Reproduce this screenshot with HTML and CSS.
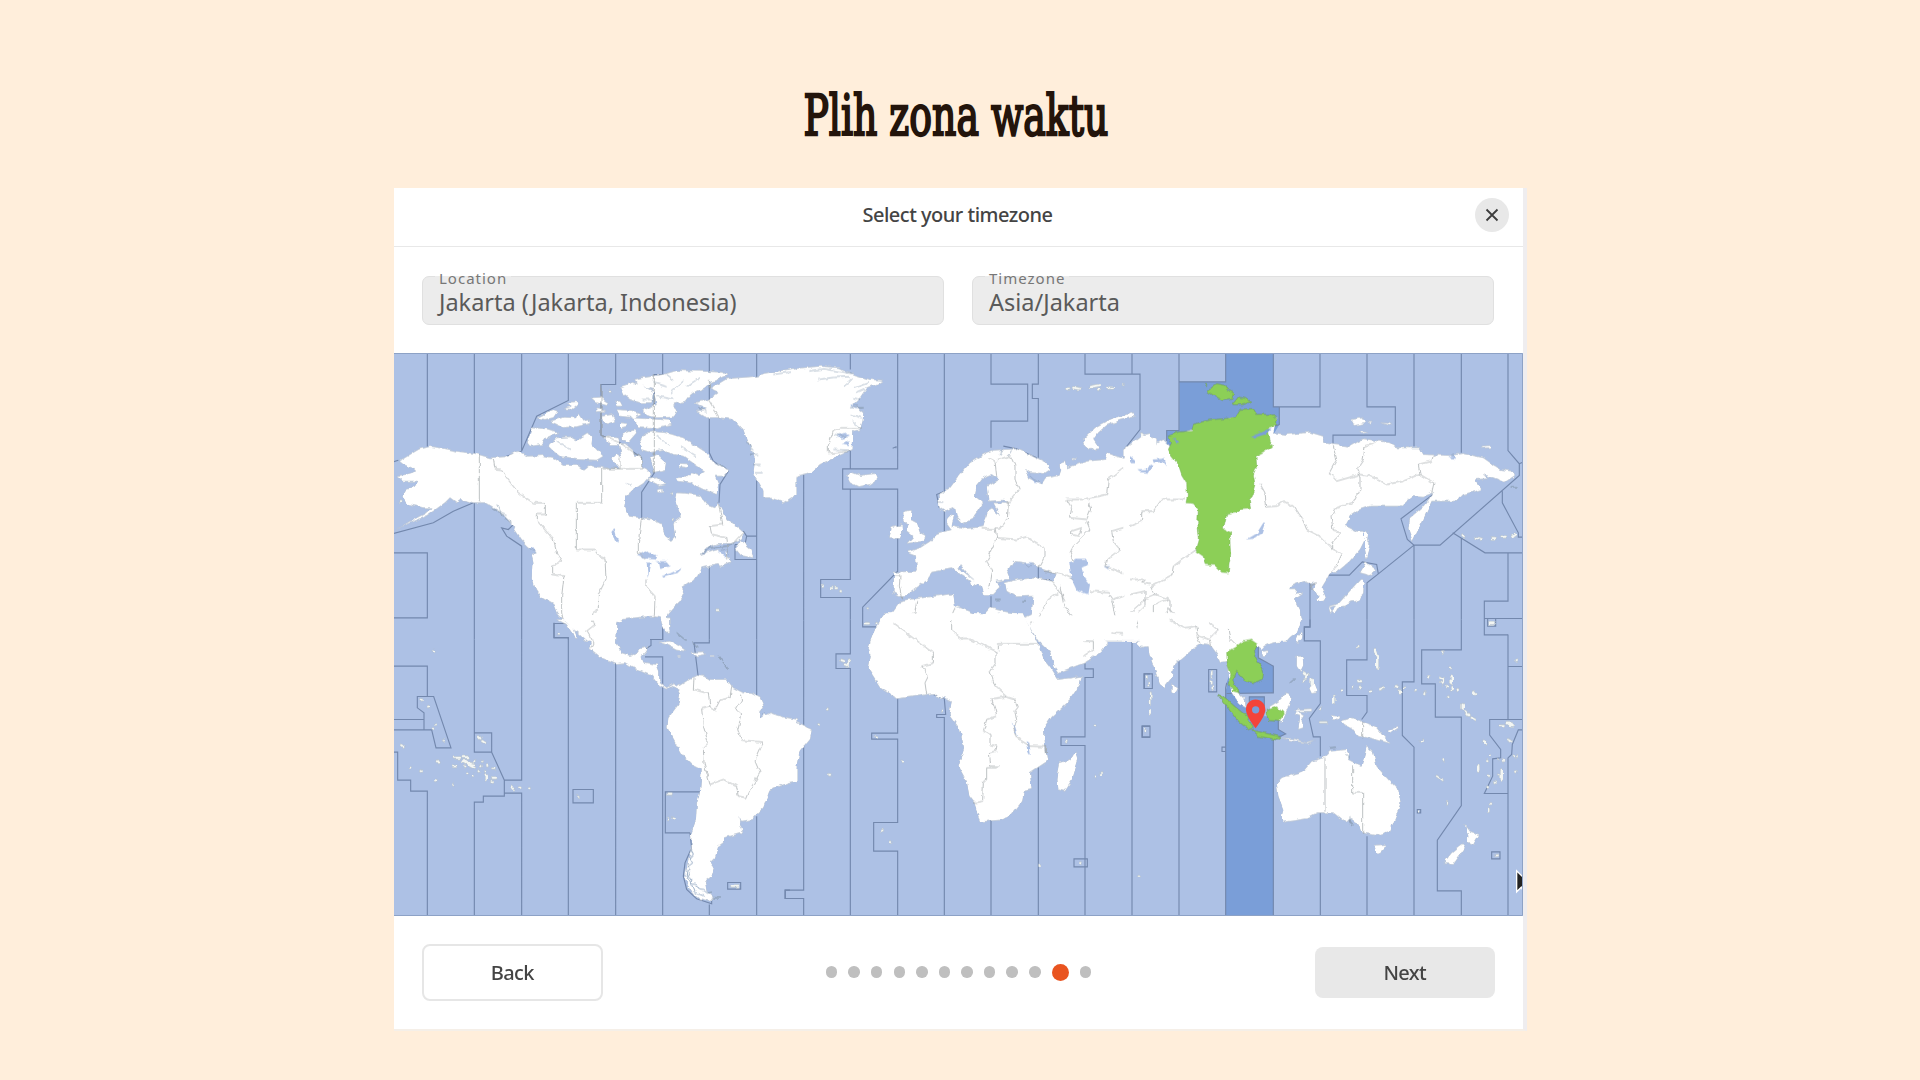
FILE: index.html
```html
<!DOCTYPE html>
<html lang="id">
<head>
<meta charset="utf-8">
<title>Plih zona waktu</title>
<link rel="stylesheet" href="styles.css">
</head>
<body>
<h1 class="title"><span class="title-text">Plih zona waktu</span></h1>
<main class="installer">
  <header class="bar">
    <h2 class="bar-title">Select your timezone</h2>
    <button class="close" aria-label="Close">
      <svg viewBox="0 0 14 14"><path d="M1.5 1.5l11 11M12.5 1.5l-11 11"/></svg>
    </button>
  </header>
  <form class="fields">
    <div class="field"><span class="label">Location</span><span class="value">Jakarta (Jakarta, Indonesia)</span></div>
    <div class="field"><span class="label">Timezone</span><span class="value">Asia/Jakarta</span></div>
  </form>
  <svg class="map" viewBox="394 353.5 1129 563" preserveAspectRatio="none">
    <defs>
      <filter id="coast" x="0" y="0" width="1" height="1" filterUnits="objectBoundingBox" color-interpolation-filters="sRGB">
        <feTurbulence type="fractalNoise" baseFrequency="0.16" numOctaves="2" seed="4" result="n"/>
        <feDisplacementMap in="SourceGraphic" in2="n" scale="4.5" xChannelSelector="R" yChannelSelector="G" result="d"/>
        <feDropShadow in="d" dx="0" dy="0" stdDeviation="0.6" flood-color="#5f7080" flood-opacity="0.75"/>
      </filter>
    </defs>
    <rect class="sea" x="394" y="353" width="1130" height="564"/>

    <!-- selected zone, UTC+7 -->
    <g transform="translate(1130 350) scale(.33333)"><path class="zone" d="M287 10H430V172H448V225L410 290H110V243H148V97H287Z"/></g>
    <g transform="translate(1130 620) scale(.33333)">
      <path class="zone" d="M385 75V115L430 140V220L290 222V190L330 75Z"/>
      <path class="zone" d="M287 205L345 260 358 270V232H403V290H445V330L467 343 440 360H430V887H287Z"/>
    </g>

    <!-- zone boundaries at sea -->
    <g class="lines" transform="translate(390 350) scale(.33333)">
      <path d="M112 10V291M253 10V312M395 10V305M535 10V153L440 200 395 305 345 322M677 10V105H633V257L690 280 755 325M818 10V75H793V370L755 428V505M958 10V310L970 335 1015 365 990 405 987 460M1100 10V95M958 210V150M1100 375V870M0 340L25 332M0 555L130 520 190 485 250 460M253 460V870M0 610H112V805H0M375 520L355 540 335 535 350 560 395 590V870M535 822H492V865H535V870M818 805V870H780M958 650V870M1070 560H1100M1035 585V630H1100M1060 545L1070 560 1065 585H1035"/>
    </g>
    <g class="lines" transform="translate(770 350) scale(.33333)">
      <path d="M101 375V812M241 10V60M241 300V358M383 10V358H218V419H383V665L278 773V832H325M241 419V690H152V744H241V810M523 10V425L500 435 508 475M523 480V545M663 10V104H773V215H663V295M805 10V104H787V147H805V325M945 10V74H1110V240L1064 298V325M1086 10V74M805 640V690H840M663 740V790M700 290L740 298 800 325"/>
      <path d="M368 296L378 292V296"/>
    </g>
    <g class="lines" transform="translate(1130 350) scale(.33333)">
      <path d="M147 10V243H110V275M147 97H287V10M430 10V172H570V10M430 172H448V225L430 232M711 10V172H796V257H609V295M852 10V290M994 10V310M1134 10V303L1168 343V378L930 587H852L832 570 813 508 915 430M1178 338L1168 343M1117 425V460L1165 550V563H1178M968 550L1065 610H1178M1134 610V755H1063V807H1178M1063 807V856H1134M1073 807V830H1097V807M994 567V810M852 587V810M852 587L745 673 711 700V810M595 677H658L697 637 740 645 745 673M540 700V832H523V870"/>
    </g>
    <g class="lines" transform="translate(390 620) scale(.33333)">
      <path d="M112 887V515H62V482H23V398H12M12 140H112V230M12 300H102M12 331H125L138 385H183L131 231H82V265L102 280V331M253 60V340H305V398H253V340M305 398L343 482V530H280V548H253V887M395 60V482H343M343 521H395V887M492 10V54H535V887M677 130V887M818 30V60H783V78L750 100M765 112H818V887M958 60V70H912L925 175M1100 60V230M1100 590V887M549 510H610V550H549ZM930 517H826V640H900L905 685 885 730 880 770 890 810 920 838 965 853V840M958 855V887M1013 789H1052V809H1013ZM1200 812H1185V837H1200"/>
    </g>
    <g class="lines" transform="translate(770 620) scale(.33333)">
      <path d="M101 2V320M101 370V812H46V837H101V887M241 0V103H198V147H241V887M383 235V341H305V359H383V609H311V695H383V887M490 225L523 238 527 285H500V294H523V887M663 600V887M805 440V887M945 50V148H970V174H945V352H873V378H945V887M1086 55V887M912 718H952V742H912ZM1140 163H1122V207H1140M1140 320H1116V353H1140"/>
    </g>
    <g class="lines" transform="translate(1130 620) scale(.33333)">
      <path d="M147 125V887M287 887V205L290 190M430 887V360M385 75V115L430 140V220L290 222M358 270V232H403V262M430 360L467 343 445 330V300M43 163H67V207H43ZM37 320H60V353H37ZM236 150H260V217H236ZM287 383H276V396H287M540 0V23H523V64H571V252L538 297 550 352H571V410M571 580V887M711 0V121H650V228H711V278L695 300M711 650V887M852 0V187H817V348L852 383V887M994 0V91H875V193H916V293H994V558L922 662V814H994V887M1134 887V415M1178 141H1134V45M1134 141V300M1178 300H1079V347L1112 390V415L1088 418V470L1063 522H1134M1178 331H1165L1147 375 1145 405 1134 415M1085 697H1110V718H1085ZM862 570H872V580H862Z"/>
    </g>

    <g class="lands" filter="url(#coast)">
      <!-- North America -->
      <g transform="translate(390 350) scale(.33333)">
        <path class="land" d="M28 335L60 315 85 300 120 291 150 295 200 305 255 312 300 325 345 322 385 305 410 320 460 318 490 325 520 345 560 345 582 362 600 348 640 355 690 358 665 330 680 313 697 325 686 285 705 282 730 303 733 320 752 322 757 355 787 370 760 402 728 422 708 440 703 473 718 500 755 505 785 508 815 522 825 558 843 573 855 560 850 522 872 505 866 480 858 450 862 430 895 432 930 438 950 465 975 475 985 460 1000 490 1015 510 1040 530 1060 548 1055 568 1025 582 985 582 950 595 930 615 985 600 1008 605 1018 628 1025 640 990 655 985 645 958 650 935 655 925 685 895 700 873 715 882 735 870 755 850 775 832 795 830 815 840 846 828 848 815 822 812 805 790 800 750 803 700 810 680 820 675 875H590L545 835 515 805 500 790 490 765 455 745 435 715 428 690 430 640 425 618 440 610 415 590 395 570 365 525 340 495 310 475 285 460 250 460 215 450 200 460 180 445 165 460 130 485 100 505 60 520 15 542 60 515 105 492 125 475 100 475 80 470 55 465 35 440 50 420 75 410 82 395 40 395 20 378 50 375 75 365 65 355 40 345Z"/>
        <path class="land" d="M425 235L470 238 505 248 470 265 455 285 420 290 412 280ZM475 290L500 265 540 262 560 272 595 250 607 260 605 285 640 320 620 332 560 330 515 325 490 305ZM440 205L490 180 503 185 490 205 465 210ZM480 215L520 203 560 205 565 193 578 212 597 208 600 222 560 232 520 234ZM530 160L560 156 563 165 545 180 520 178 545 170ZM603 145L630 143 655 160 650 168 620 160ZM672 155L690 155 698 170 680 170ZM635 200L665 195 675 215 655 224 640 215ZM625 175L650 185 620 187ZM680 180L725 183 755 195 735 205 690 200ZM690 220L715 222 710 232 690 235ZM725 205L840 212 842 225 800 235 745 232ZM695 255L735 240 740 250 715 278 695 270ZM637 260L685 265 690 285 660 285ZM690 112L730 98 760 110 790 125 785 160 750 160 720 150 700 135ZM733 90L760 84 820 75 860 63 935 65 1000 68 1012 78 960 100 945 115 900 135 885 155 850 165 860 185 850 203 800 205 760 195 760 180 800 165 790 120 745 105ZM750 280L765 250 795 247 830 250 880 265 920 290 950 310 968 335 1017 362 1000 380 975 380 985 405 980 432 940 420 900 400 865 395 860 385 890 383 905 370 925 378 945 365 915 345 880 320 850 315 820 300 775 307 752 300ZM780 325L800 315 828 340 825 360 795 368ZM870 342L893 343 890 355 870 352ZM770 390L800 385 830 405 810 410ZM805 420L818 418 818 430 805 428ZM490 330L515 343 500 343ZM1055 570L1035 600 1050 618 1090 625 1080 598 1065 585ZM960 625L990 632 1020 632 1000 645 965 640Z"/>
        <path class="land" d="M912 160L955 150 985 130 960 118 1010 88 1100 80 1140 72 1220 55V435L1180 460 1160 445 1130 440 1110 410 1090 375 1095 330 1085 300 1070 270 1060 240 1030 210 985 205 950 205 920 185 950 178Z"/>
        <path class="water" d="M663 545L675 540 680 560 687 580 676 572ZM740 618L770 603 800 618 795 630 760 627ZM770 640L785 638 780 660 773 685ZM795 635L830 635 842 650 825 655 812 662 808 640ZM812 680L840 672 878 655 865 668 820 685ZM425 590L437 608 420 598ZM1005 600L985 605 1010 625Z"/>
        <path class="hair" d="M790 100L830 112M830 75L850 90M880 95L840 130M930 85L890 110M755 150H790M800 140L850 150M500 275L540 300M800 260L840 290M870 290L920 320M990 345L1010 358M310 480L350 495M320 465L340 500M345 505L365 520M1070 275L1090 300M1080 315H1105M1090 345H1112M1095 370H1118M710 403L725 408M925 175L950 185M930 615L960 595 1010 590 1030 580"/>
        <path class="dots" d="M660 128h.1M984 782h.1M845 432h.1M30 458h.1M850 510h.1"/>
        <path class="border" d="M268 315V455M310 325L315 358 335 360 350 385 385 430 430 460H466V495H442V515L490 570 500 610 515 635 485 650 485 675 522 680 515 740 515 790 522 822M755 325V358H635V460H559V600H613L625 618 645 625 648 690 625 735V780L608 790 612 825 590 845 600 870M690 325V358M755 505L750 540 745 580 745 610 770 630M768 690V710L795 740 793 800M985 460L998 525 960 530 965 555 1010 565 1015 600 1010 630M1060 548L1030 580M633 105V257L690 280 755 325M793 75V370M958 95V118M955 150L988 205"/>
      </g>
      <!-- Greenland, Europe, western Asia -->
      <g transform="translate(770 350) scale(.33333)">
        <path class="land" d="M-20 72L40 62 100 55 150 50 210 55 250 75 300 90 340 92 320 104 290 115 270 145 250 165 280 190 278 215 270 240 250 245 248 300 150 345 125 368 85 378 65 395 50 430 40 458 0 445H-20Z"/>
        <path class="land" d="M228 375L250 370 270 378 315 372 322 390 300 405 265 412 240 400Z"/>
        <path class="land" d="M400 485L425 482 422 510 440 520 450 550 467 558 460 575 410 582 430 560 410 545 415 525 400 515ZM365 535L395 525 397 550 390 567 358 565Z"/>
        <path class="land" d="M505 435L540 415 570 375 600 340 640 315 670 302 740 298 780 315 830 340 838 360 820 372 780 370 765 360 775 385 815 405 830 385 865 378 870 362 905 350 950 335 1005 330 1010 310 1040 320 1070 330 1075 310 1090 275 1115 255 1160 270V875H940L915 850 905 805 920 815 935 840 945 875H805L770 820 762 805 785 795 790 740 740 742 710 725 705 700 740 690 800 685 845 695 860 675 805 655 790 640 765 640 730 635 712 665 722 690 705 690 680 695 690 715 670 735 640 735 630 705 600 680 570 645 565 655 610 690 632 700 605 710 600 695 545 655 485 665 475 690 440 715 410 738 385 738 370 730 372 668 440 665 438 620 408 608 450 595 480 575 500 555 545 540 530 520 540 495 552 500 545 530 580 538 640 532 655 480 665 475 690 497 670 460 720 462 700 452 655 455 650 410 685 390 665 375 640 385 620 410 615 440 640 460 620 490 605 510 580 522 560 500 555 475 525 487 508 475Z"/>
        <path class="land" d="M945 290L940 270 975 235 1030 205 1090 190 1098 200 1050 212 1010 228 985 250 970 270 988 298 960 300ZM1085 290L1115 260 1140 255V360L1110 365 1090 330ZM868 342L885 337 890 360 872 362ZM908 323L922 325 910 332Z"/>
        <path class="land" d="M300 875L340 820 375 780 395 752 435 748 550 733 555 770 600 785 635 802 660 775 700 785 755 795 770 825 800 875Z"/>
        <path class="water" d="M898 640L920 628 948 628 955 645 935 655 940 680 960 705 955 735 920 722 905 690ZM1000 650H1020L1015 660ZM765 640L785 638 780 650ZM200 258L225 250 240 258 215 268ZM215 285L235 275 240 290ZM240 170L260 165V180ZM778 375L800 395 815 402 795 400Z"/>
        <path class="hair" d="M145 90L190 84 240 82M222 108L245 88M118 65L160 58 210 66 245 72M10 75L60 68M255 115L295 100M258 130L285 118M250 145L270 150M240 175H278M245 195L275 205M245 215L270 235M190 300L235 302M195 255L230 262M505 435L525 430M505 455H520M700 300L690 318M725 302L715 320"/>
        <path class="dots" d="M158 708h.1M186 716h.1M197 716h.1M212 725h.1M293 778h.1M288 822h8M320 822h.1M890 118h8M910 115l20 3M960 112l30 -5M985 120h5M1012 115h20M1060 105h.1"/>
        <path class="hair" d="M675 750h20M757 754h14M685 790v45"/>
        <path class="border" d="M175 310V290L190 245 215 235 275 235M175 312L240 305M655 325L675 335 680 380M680 330L722 320 735 350V390L748 420 715 460 712 510 690 538H635M675 538L680 565 650 635 665 660 655 720M680 565L740 570 770 562 825 595V620L805 655M825 665L880 675 910 690M840 690L865 720 885 755M1064 325L1070 350 1015 390 1010 435 940 450 890 450 905 475 900 505 950 510 962 480 955 455M950 515L960 540 910 590 900 610 910 635M905 545L935 535 925 560 905 555ZM1140 485L1115 490 1110 520 1025 545 1030 575 1050 600 1010 630 1005 650 1080 680 1110 690 1140 695M960 725L1015 730 1030 750 1100 725 1140 715M870 710L880 760 905 805M1025 750L1035 800 1040 825 1025 850 1090 855M1035 810H1075L1110 770 1115 730M865 730L835 750 800 810 780 820M370 825L435 788 440 755M370 825L440 870M555 775L540 810 550 870M395 745L388 710 390 680 372 680"/>
      </g>
      <!-- Northern and eastern Asia -->
      <g transform="translate(1130 350) scale(.33333)">
        <path class="land" d="M-20 300L20 270 45 262 55 275 50 325 70 330 75 285 100 270 120 290 170 245 300 205 440 205 430 250 470 255 540 248 580 260 580 280 610 285 660 290 700 268 780 280 800 295 870 295 880 315 960 318 1000 312 1060 325 1110 360 1150 365 1155 378 1125 398 1090 385 1060 375 1075 388 1035 390 1055 420 1000 435 980 455 905 455 880 510 848 575 835 540 840 505 880 470 910 430 880 440 850 438 810 470 720 470 690 480 660 500 645 528 680 545 700 545 705 570 690 600 655 640 620 668 600 670 590 690 575 715 588 745 580 755 562 757 565 735 550 720 560 700 540 703 520 695 480 712 478 718 500 718 495 730 520 732 495 750 510 780 512 820 490 850 470 875H-20Z"/>
        <path class="land" d="M705 545H715L712 575 722 585 710 630 705 600ZM690 670L708 640 738 662 720 678ZM690 690L702 690 700 735 680 755 650 758 645 770 610 770 597 775 600 790 605 785M597 770L650 755 690 710V690L705 700 690 750 650 762 610 790ZM665 210L700 205 705 222 675 228ZM710 215H728L720 222ZM748 220L785 222 780 228ZM690 245L715 250 700 254ZM1055 290L1080 288 1080 295 1055 296ZM0 195L15 192 10 202ZM500 870L515 850 512 870Z"/>
        <path class="water" d="M350 570L380 552 400 520 405 520 395 550 370 568ZM22 362L50 362 60 345 68 350 55 370 30 368ZM65 330L100 328 108 350 98 338 68 340ZM0 320L15 330V338H0ZM955 325L970 312 975 328Z"/>
        <path class="dots" d="M998 557l4 3M1040 565l12 4M1085 566h8M1115 562h12M1155 555l-8 6M1080 820h10M35 257h.1"/>
        <path class="hair" d="M1142 412h18"/>
        <path class="green" d="M115 260L145 248 185 245 190 225 240 212 315 205 330 180 370 178 380 195 425 195 440 208V225L415 235 420 275 428 290 400 310 378 322 380 350 370 375 375 405 368 430 358 455 362 475 330 478 320 490 290 495 280 540 302 550 300 575 302 620 297 645 295 670 275 668 255 648 225 645 220 620 198 605 208 570 203 520 205 480 190 462 168 460 172 440 170 400 155 375 145 345 125 320 115 300 125 280ZM232 125L260 103 285 108 290 120 310 130 305 150 280 152 255 140ZM308 165L325 143 350 148 362 156 340 165ZM222 103H230V108Z"/>
        <path class="water dark" d="M360 265L410 240 425 236 405 255 375 264ZM130 262L148 282 140 283Z"/>
        <path class="border" d="M390 403L405 430 410 472 440 470 460 455 490 470 520 515 530 540 570 560 605 595M610 290L620 330 598 370 620 395 690 375 720 380 770 405 820 395 870 375 865 345 905 335 910 318M740 280L705 290 700 330 680 360 690 385V420L670 460 620 475 603 500 610 545 635 550 605 580 605 600 635 615 620 650 600 670M870 375L895 390 912 400 905 430M0 530L35 515 35 485 70 485 95 450 165 450M200 600L150 635 130 650 125 680 65 710 75 735 50 745 0 790M0 690H50L35 700 60 705M75 735L120 750V785L155 805 200 835 280 820 295 830 300 870M125 785L110 775 115 810 190 840 240 830M0 735L45 725V770L25 790M115 750L70 765V800L25 840 30 870M200 830V860L240 870 285 825M560 700L540 710 555 720"/>
      </g>
      <!-- Central and South America -->
      <g transform="translate(390 620) scale(.33333)">
        <path class="land" d="M500 0L520 0 550 25 560 50 563 60 545 40 530 15ZM520 -15H682V25L678 70 695 100 720 108 740 100 750 85 773 80 770 95 755 112 760 128 800 135 808 155 808 185 830 205 850 192 865 200 905 175 925 168 945 170 960 180 1010 180 1030 205 1060 220 1085 222 1110 235 1122 262 1105 280 1110 295 1140 280 1170 290 1220 300V485L1165 495 1138 515 1120 565 1085 600 1055 605 1045 590 1060 630 1050 642 1005 655 1000 670 985 680 975 715 960 730 975 750 960 775 945 785 950 815 972 835 960 845 930 838 900 815 885 775 895 720 905 690 903 645 918 600 920 555 930 515 935 450 905 435 875 405 850 360 832 325 835 295 865 255 870 225 860 205 845 200 830 210 805 195 785 170 745 152 705 130 680 132 630 112 600 88 605 70Z"/>
        <path class="land" d="M805 68L840 65 870 80 890 95 860 92 825 74ZM905 98L940 97 948 105 915 110ZM862 108H872V111H862ZM960 108H973V111H960ZM818 -5H838V40L828 30Z"/>
        <path class="water" d="M1110 293L1125 278 1122 288ZM1128 293L1140 285 1136 294Z"/>
        <path class="hair" d="M860 40l30 25M905 70l20 12M985 110l28 40M965 835h28"/>
        <path class="dots" d="M132 96h.1M95 241h.1M115 261h.1M137 315h.1M129 328h.1M161 363h.1M34 377l6 6M61 445h.1M92 455h.1M141 425l6 7M139 483h.1M190 496h.1M267 352l4 5M277 365l8 5M195 415h12M218 413h14M217 425h12M230 430l25 5M240 438l14 8M226 440h.1M190 441h8M253 425h.1M277 425h.1M271 440h.1M292 439h.1M269 455h.1M287 455h.1M307 448h6M232 463h.1M249 468h.1M287 468v13M308 475h10M308 488h.1M364 501l8 10M388 505h.1M421 507h.1M565 533h.1M836 523h8M835 597h.1M851 597h.1M506 45h.1M1025 799h20"/>
        <path class="border" d="M605 0L615 15 590 35 612 70 605 85M912 175L910 210 955 222 960 262 975 272 990 242 1020 235 1025 200M960 262L935 268 940 320 955 370 940 385 942 430 960 495 1000 480 1040 500 1045 530 1070 535 1080 510 1110 460 1095 425 1120 368 1055 362 1043 330 1055 285 1038 270 1055 240 1050 225"/>
        <path class="fjords" d="M905 690l5 15-10 12 8 14-14 10 8 14-8 16 12 8-4 14 16 2 8 16 16 2 10 8 14-2M895 750l-4 20 12 20 10 28 30 12"/>
      </g>
      <!-- Africa, Arabia -->
      <g transform="translate(770 620) scale(.33333)">
        <path class="land" d="M335 -5L345 -20H758L770 5 805 75 820 115 845 148 865 180 935 170 930 195 900 240 845 290 822 325 825 375 832 425 780 460 785 510 762 515 757 545 720 590 690 602 630 607 613 550 598 530 590 485 565 440 582 385 570 330 538 285 545 245 525 235 508 238 490 222 455 228 430 232 380 238 330 205 295 150 302 110 295 85 310 40Z"/>
        <path class="land" d="M780 -10H905L935 50 950 65 975 40 1015 70 990 100 945 130 865 160 855 145 840 100 810 70ZM940 -10H1160V75L1120 80 1100 55 1070 40 1000 38 955 22Z"/>
        <path class="land" d="M918 395L925 420 905 485 885 515 865 510 862 480 870 430 900 420ZM-20 285L30 290 35 305 80 308 125 330 120 360 88 400 75 460 55 490 0 512H-20Z"/>
        <path class="water" d="M725 310L735 320 745 352 735 340ZM770 365L778 370 783 408 775 395Z"/>
        <path class="dots" d="M175 269h.1M146 316h.1M178 466h2M317 351h.1M396 426h.1M515 274h.1M337 633h.1M363 668h.1M889 364h.1M975 320h.1M993 464h.1M975 474h.1M809 740h.1M931 731h.1M215 122l8 3M238 125l-3 14M225 138l6 2"/>
        <path class="border" d="M370 12L490 100V130L455 140 475 170 465 190 470 225M545 0V35L580 60 600 60 678 95V130L660 155 675 200 710 232 735 240 745 262 735 275 740 305 730 325 740 355 780 380 830 382 828 400M685 95V73H805M710 232L665 238 675 270 680 290 650 300 640 335 660 345V375L678 380 675 395 658 400 662 440H688M680 445H650V480L640 490 638 545 610 550M940 65H970V90L940 110"/>
      </g>
      <!-- India, South-East Asia, Oceania -->
      <g transform="translate(1130 620) scale(.33333)">
        <path class="land" d="M-20 -20H500L515 0 500 40 460 65 430 70 405 80 395 92 375 75 320 110 295 125 270 130 262 105 240 75 215 72 195 85 145 125 130 140 125 175 103 203 90 195 72 145 58 105 55 75 30 82 18 70 35 65 10 50 -20 55Z"/>
        <path class="land" d="M125 190L143 210 132 225 124 218ZM395 97L412 93 408 108 398 108ZM505 45L515 50 505 70 500 60ZM500 110H518L520 135 510 155 500 140ZM537 205L552 192 560 220 545 222ZM295 130L303 150 302 195 320 215 345 240 348 265 330 255 305 220 298 190ZM418 262L445 245 470 220 485 235 475 262 455 310 440 300ZM495 285L510 290 505 330 520 325 515 300 525 285 500 275ZM495 270L545 268V275H500ZM605 288L630 290 628 303 610 300ZM635 303L665 295 710 310 740 325 760 350 782 372 745 362 715 355 685 350 665 325 640 312ZM770 335L800 320 803 325 780 340ZM450 355L490 358 530 370 555 360 535 372 480 362Z"/>
        <path class="land" d="M440 490L455 475 520 455 545 425 580 415 600 395 650 390 658 400 655 420 695 440 710 382 730 400 740 440 775 480 805 510 812 550 800 585 780 635 740 648 695 640 685 615 665 600 645 608 610 580 565 580 530 598 460 608 455 590 460 570 445 530ZM732 677L765 675 762 690 750 702 740 698ZM1003 612L1020 635 1048 645 1030 675 1012 668 1015 650ZM998 673L1005 685 970 735 940 732 965 700Z"/>
        <path class="dots" d="M682 83h.1M735 90l5 20M742 115v30M520 155l6 10M535 165l-8 12M545 180v15M522 185h.1M636 210h.1M666 202h.1M685 188h8M690 203h.1M720 213h.1M748 210l10-4M798 200l6 4M824 205h.1M857 214h.1M883 221h.1M810 215v6M613 230v18M573 268h.1M937 101h.1M960 145h.1M895 174h.1M928 172l8 5M932 188l5 5M942 178v12M965 172v18M952 200h.1M968 202v10M983 213h.1M955 230h.1M1030 218v4M1035 224h.1M998 255v12M1005 275l10 12M1022 295l12 5M1160 122h.1M1110 320h8M1130 312h15M1140 320h8M1138 360l6 5M1062 365v6M1068 376h.1M1082 408h.1M1072 425h.1M1105 420h.1M1122 424h.1M1152 410h.1M1162 410h.1M1159 457h.1M1045 440v12M1115 450v30M1106 468h.1M1074 472h.1M1097 487h.1M1073 503h.1M951 550h.1M1083 553h.1M1078 568v8M1097 708h6M867 576h.1M1080 10h10"/>
        <path class="dots small" d="M50 170v10M55 190v8M62 220v35M60 270v15M46 328v8M245 157v16M242 185v8M250 200v8M25 770h4M570 308h20M920 470l18 12M872 366l8-4M940 418v4"/>
        <path class="green" d="M290 98L320 80 335 68 365 62 383 75 370 100 385 130 400 155 398 178 370 192 345 182 320 155 308 185 318 205 328 220 310 215 295 190 303 165 292 130ZM263 225L285 235 315 262 350 290 370 325 355 330 320 300 290 260ZM365 333L400 340 450 352 440 360 385 350ZM408 275L440 262 460 280 450 305 415 303Z"/>
        <path class="border" d="M585 415V577M668 440V520H698V642M698 305V355M20 0L25 25M115 0L160 25 200 20 205 50 235 60 265 30 240 10M200 50L210 72M295 30L300 60 315 75M240 60L245 80"/>
        <path class="hair" d="M478 192l16-14M600 385l20-2M645 400l14 12M655 600l15 20M660 590v20"/>
      </g>
    </g>

    <!-- location pin and pointer -->
    <g transform="translate(1130 620) scale(.33333)">
      <path class="pin" fill-rule="evenodd" d="M377 240C360 240 348 253 348 270C348 291 377 326 377 326S406 291 406 270C406 253 394 240 377 240ZM377 260A11 11 0 1 1 377 282A11 11 0 1 1 377 260Z"/>
      <path class="pointer" d="M1160 754V817L1174 803 1182 820V776Z"/>
    </g>
    <path class="frame" d="M394 354H1522.5V916H394"/>
  </svg>
  <footer class="actions">
    <button class="btn back">Back</button>
    <div class="steps">
      <i></i><i></i><i></i><i></i><i></i><i></i><i></i><i></i><i></i><i></i><i class="current"></i><i></i>
    </div>
    <button class="btn next">Next</button>
  </footer>
</main>
</body>
</html>
```
FILE: styles.css
```css
* { box-sizing: border-box; }
body {
  margin: 0;
  width: 1920px;
  height: 1080px;
  overflow: hidden;
  background: #ffeedb;
  font-family: "Noto Sans", "Open Sans", sans-serif;
  color: #444;
}
.title {
  margin: 0;
  height: 188px;
  padding-top: 81px;
  display: flex;
  justify-content: center;
  font-family: "DejaVu Serif", serif;
  font-weight: 400;
  font-size: 56px;
  line-height: 70px;
  color: #23140b;
}
.title-text {
  white-space: nowrap;
  transform: scaleX(.675);
  margin-right: 8px;
  -webkit-text-stroke: 2.4px #23140b;
}
.installer {
  width: 1133px;
  height: 843px;
  margin-left: 394px;
  background: #fff;
  border-right: 4px solid #efedef;
  border-bottom: 2px solid #f5efe8;
  display: flex;
  flex-direction: column;
}
.bar {
  height: 59px;
  flex: none;
  display: grid;
  grid-template-columns: 60px 1fr 60px;
  align-items: center;
  border-bottom: 1.5px solid #e8e8e8;
  padding-bottom: 4px;
}
.bar-title {
  grid-column: 2;
  margin: -2px 0 0;
  text-align: center;
  font-size: 20px;
  font-weight: 500;
  letter-spacing: -.5px;
  padding-right: 2px;
}
.close {
  width: 34px;
  height: 34px;
  margin-left: 12px;
  padding: 0;
  border: 0;
  border-radius: 50%;
  background: #e8e8e8;
  display: grid;
  place-items: center;
}
.close svg { width: 14px; height: 14px; fill: none; stroke: #3d3d3d; stroke-width: 1.8; }
.fields {
  flex: none;
  height: 106px;
  padding: 29px 28px 0;
  display: grid;
  grid-template-columns: 522px 522px;
  column-gap: 28px;
}
.field {
  position: relative;
  height: 49px;
  padding-left: 16px;
  background: #ececec;
  border: 1.5px solid #e0e0e0;
  border-radius: 7px;
}
.label {
  position: absolute;
  left: 12px;
  top: -9px;
  padding: 0 4px;
  font-size: 15px;
  line-height: 20px;
  letter-spacing: 1px;
  color: #777;
  background: linear-gradient(#fff 0 8px, #ececec 8px);
  white-space: nowrap;
}
.value {
  display: block;
  padding-top: 8px;
  font-size: 23.5px;
  line-height: 34px;
  color: #5a5a5a;
  white-space: nowrap;
}
.map { display: block; flex: none; width: 1129px; height: 563px; }
.sea { fill: #adc1e5; }
.zone { fill: #7a9ed8; }
.lines { fill: none; stroke: #7388ad; stroke-width: 3.4; }
.land { fill: #fff; }
.water { fill: #adc1e5; }
.dark { fill: #7a9ed8; }
.green { fill: #8ccf57; stroke: #78b258; stroke-width: 1.5; }
.border { fill: none; stroke: #b4b8bb; stroke-width: 2.6; }
.dots { fill: none; stroke: #f3f6f3; stroke-width: 8; stroke-linecap: round; }
.small { stroke-width: 6; }
.hair { fill: none; stroke: #93a4b8; stroke-width: 2; }
.fjords { fill: none; stroke: #9cb0c8; stroke-width: 3; }
.pin { fill: #f4443a; }
.pointer { fill: #222; stroke: #fff; stroke-width: 4; }
.frame { fill: none; stroke: #8da2c6; stroke-width: 1; }
.actions {
  flex: 1;
  padding: 0 28px 1px;
  display: flex;
  align-items: center;
  justify-content: space-between;
}
.btn {
  width: 180.5px;
  height: 51px;
  padding: 0;
  border: 0;
  border-radius: 8px;
  font: 500 20px "Noto Sans", sans-serif;
  letter-spacing: -.6px;
  color: #444;
  background: #e8e8e8;
}
.back { height: 57px; background: #fff; border: 2px solid #e6e6e6; }
.steps { display: flex; align-items: center; gap: 11.1px; }
.steps i { width: 11.5px; height: 11.5px; border-radius: 50%; background: #bfbfbf; }
.steps .current { width: 17px; height: 17px; background: #e95420; }
```
